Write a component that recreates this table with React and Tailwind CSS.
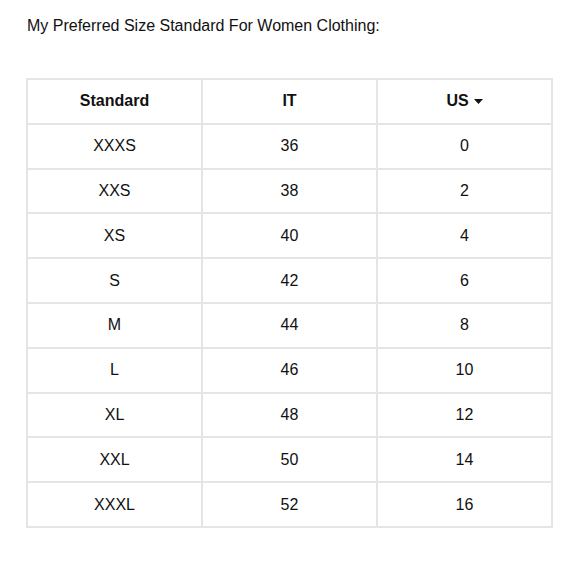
export default function App() {
  const rows = [
    ["XXXS", "36", "0"],
    ["XXS", "38", "2"],
    ["XS", "40", "4"],
    ["S", "42", "6"],
    ["M", "44", "8"],
    ["L", "46", "10"],
    ["XL", "48", "12"],
    ["XXL", "50", "14"],
    ["XXXL", "52", "16"],
  ];
  return (
    <div className="w-[580px] h-[580px] bg-white text-[#111] pl-[26px] pt-[16px]" style={{ fontFamily: '"Liberation Sans", Arial, sans-serif' }}>
      <div className="text-[16px] leading-[20px] pl-[1px]">My Preferred Size Standard For Women Clothing:</div>
      <div className="mt-[42px] w-[527px] grid grid-cols-3 gap-[2px] p-[2px] bg-[#e3e5e9]">
        <div className="bg-white h-[42.8px] flex items-center justify-center font-bold text-[16px]">Standard</div>
        <div className="bg-white h-[42.8px] flex items-center justify-center font-bold text-[16px]">IT</div>
        <div className="bg-white h-[42.8px] flex items-center justify-center font-bold text-[16px] gap-[5px]">
          <span>US</span>
          <svg width="9" height="5" viewBox="0 0 9 5"><path d="M0 0 L9 0 L4.5 5 Z" fill="#111" /></svg>
        </div>
        {rows.map((r, i) =>
          r.map((c, j) => (
            <div key={i + "-" + j} className="bg-white h-[42.8px] flex items-center justify-center text-[16px]">{c}</div>
          ))
        )}
      </div>
    </div>
  );
}
